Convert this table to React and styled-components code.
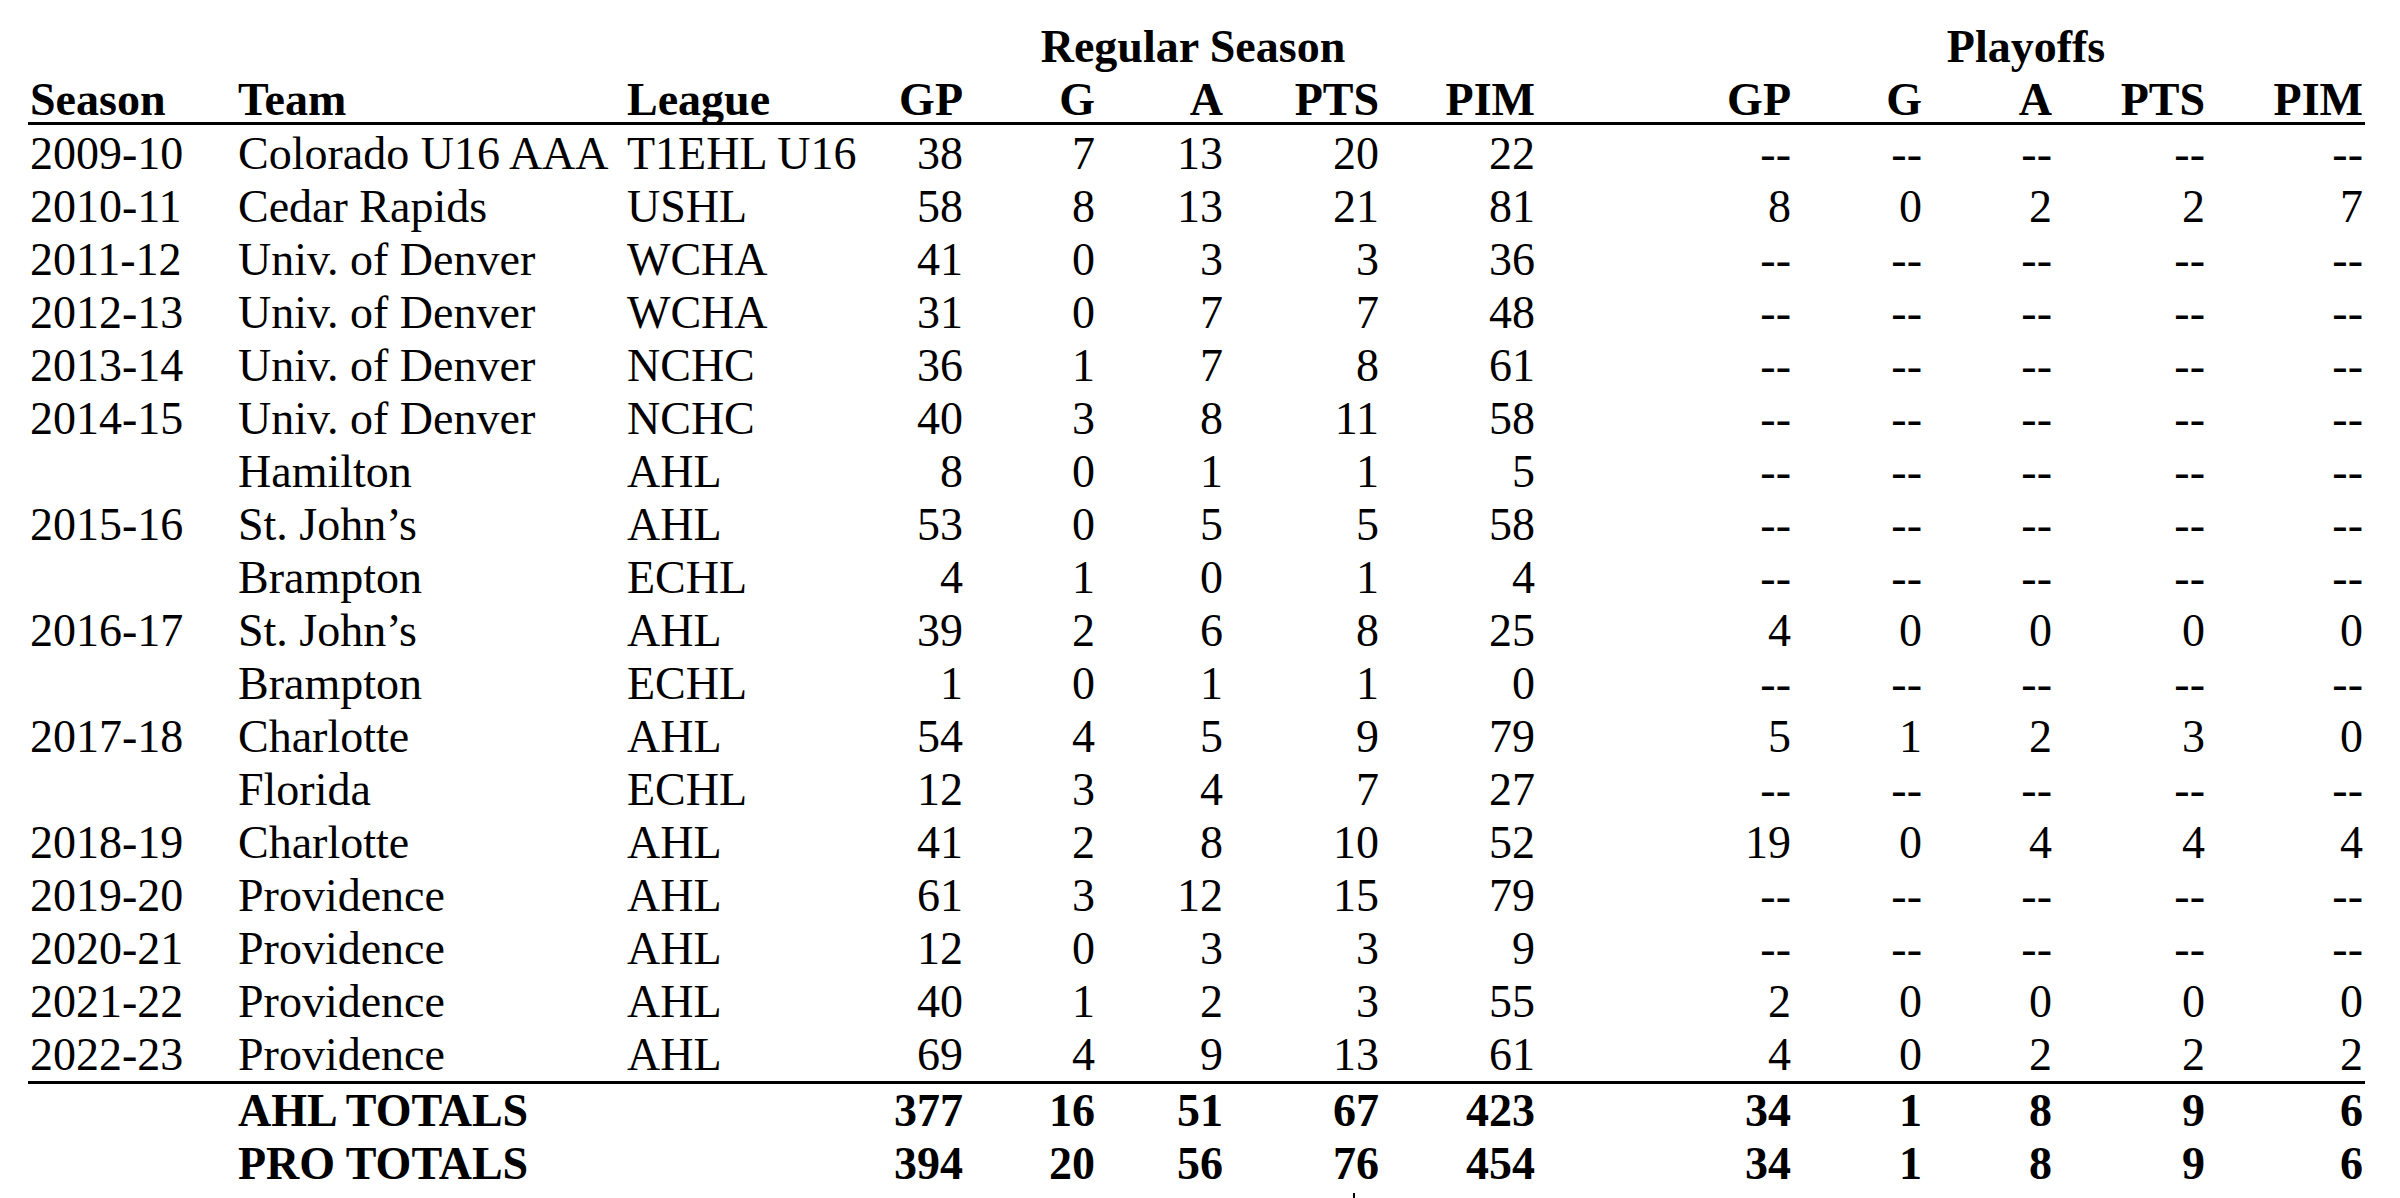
import React from "react";
import styled, { createGlobalStyle } from "styled-components";

const GlobalStyle = createGlobalStyle`
  html, body {
    margin: 0;
    padding: 0;
    background: #ffffff;
    overflow: hidden;
  }
  body {
    font-family: "Liberation Serif", "Times New Roman", serif;
    color: #000000;
  }
`;

const COLUMNS = "210px 389px 224px 112px 132px 128px 156px 156px 154px 102px 131px 130px 153px 158px";

const Sheet = styled.div`
  padding: 20px 0 0 28px;
  width: 2400px;
  height: 1198px;
  box-sizing: border-box;
  font-size: 46px;
`;

const Row = styled.div`
  display: grid;
  grid-template-columns: ${COLUMNS};
  width: 2337px;
  line-height: 53px;
  height: 53px;
  white-space: nowrap;
  font-weight: ${(p) => (p.$bold ? 700 : 400)};
`;

const TitleRow = styled(Row)`
  font-weight: 700;
`;

const HeaderRow = styled(Row)`
  font-weight: 700;
  height: 52px;
  box-sizing: border-box;
  border-bottom: 3px solid #000;
`;

const Body = styled.div`
  padding-top: 2px;
`;

const Totals = styled.div`
  border-top: 3px solid #000;
  width: 2337px;
`;

const Cell = styled.span`
  position: relative;
  text-align: ${(p) => p.$align || "right"};
  padding-left: ${(p) => (p.$first ? "2px" : "0")};
`;

const Title = styled.span`
  text-align: center;
  grid-column: ${(p) => p.$span};
`;

const StrayMark = styled.span`
  position: absolute;
  left: 130px;
  top: 56px;
  width: 2px;
  height: 7px;
  background: #000;
`;

const stats = ["GP", "G", "A", "PTS", "PIM"];

const rows = [
  ["2009-10", "Colorado U16 AAA", "T1EHL U16", ["38", "7", "13", "20", "22"], null],
  ["2010-11", "Cedar Rapids", "USHL", ["58", "8", "13", "21", "81"], ["8", "0", "2", "2", "7"]],
  ["2011-12", "Univ. of Denver", "WCHA", ["41", "0", "3", "3", "36"], null],
  ["2012-13", "Univ. of Denver", "WCHA", ["31", "0", "7", "7", "48"], null],
  ["2013-14", "Univ. of Denver", "NCHC", ["36", "1", "7", "8", "61"], null],
  ["2014-15", "Univ. of Denver", "NCHC", ["40", "3", "8", "11", "58"], null],
  ["", "Hamilton", "AHL", ["8", "0", "1", "1", "5"], null],
  ["2015-16", "St. John\u2019s", "AHL", ["53", "0", "5", "5", "58"], null],
  ["", "Brampton", "ECHL", ["4", "1", "0", "1", "4"], null],
  ["2016-17", "St. John\u2019s", "AHL", ["39", "2", "6", "8", "25"], ["4", "0", "0", "0", "0"]],
  ["", "Brampton", "ECHL", ["1", "0", "1", "1", "0"], null],
  ["2017-18", "Charlotte", "AHL", ["54", "4", "5", "9", "79"], ["5", "1", "2", "3", "0"]],
  ["", "Florida", "ECHL", ["12", "3", "4", "7", "27"], null],
  ["2018-19", "Charlotte", "AHL", ["41", "2", "8", "10", "52"], ["19", "0", "4", "4", "4"]],
  ["2019-20", "Providence", "AHL", ["61", "3", "12", "15", "79"], null],
  ["2020-21", "Providence", "AHL", ["12", "0", "3", "3", "9"], null],
  ["2021-22", "Providence", "AHL", ["40", "1", "2", "3", "55"], ["2", "0", "0", "0", "0"]],
  ["2022-23", "Providence", "AHL", ["69", "4", "9", "13", "61"], ["4", "0", "2", "2", "2"]],
];

const totals = [
  ["AHL TOTALS", ["377", "16", "51", "67", "423"], ["34", "1", "8", "9", "6"]],
  ["PRO TOTALS", ["394", "20", "56", "76", "454"], ["34", "1", "8", "9", "6"]],
];

const DASHES = ["--", "--", "--", "--", "--"];

function StatCells({ values, mark }) {
  return values.map((v, i) => (
    <Cell key={i}>
      {v}
      {mark && i === 3 ? <StrayMark /> : null}
    </Cell>
  ));
}

export default function App() {
  return (
    <>
      <GlobalStyle />
      <Sheet>
        <TitleRow>
          <Title $span="4 / 9">Regular Season</Title>
          <Title $span="10 / 15">Playoffs</Title>
        </TitleRow>
        <HeaderRow>
          <Cell $align="left" $first>Season</Cell>
          <Cell $align="left">Team</Cell>
          <Cell $align="left">League</Cell>
          <StatCells values={stats} />
          <span />
          <StatCells values={stats} />
        </HeaderRow>
        <Body>
          {rows.map(([season, team, league, reg, po], idx) => (
            <Row key={idx}>
              <Cell $align="left" $first>{season}</Cell>
              <Cell $align="left">{team}</Cell>
              <Cell $align="left">{league}</Cell>
              <StatCells values={reg} />
              <span />
              <StatCells values={po || DASHES} />
            </Row>
          ))}
        </Body>
        <Totals>
          {totals.map(([label, reg, po], idx) => (
            <Row key={label} $bold>
              <span />
              <Cell $align="left">{label}</Cell>
              <span />
              <StatCells values={reg} mark={idx === 1} />
              <span />
              <StatCells values={po} />
            </Row>
          ))}
        </Totals>
      </Sheet>
    </>
  );
}
